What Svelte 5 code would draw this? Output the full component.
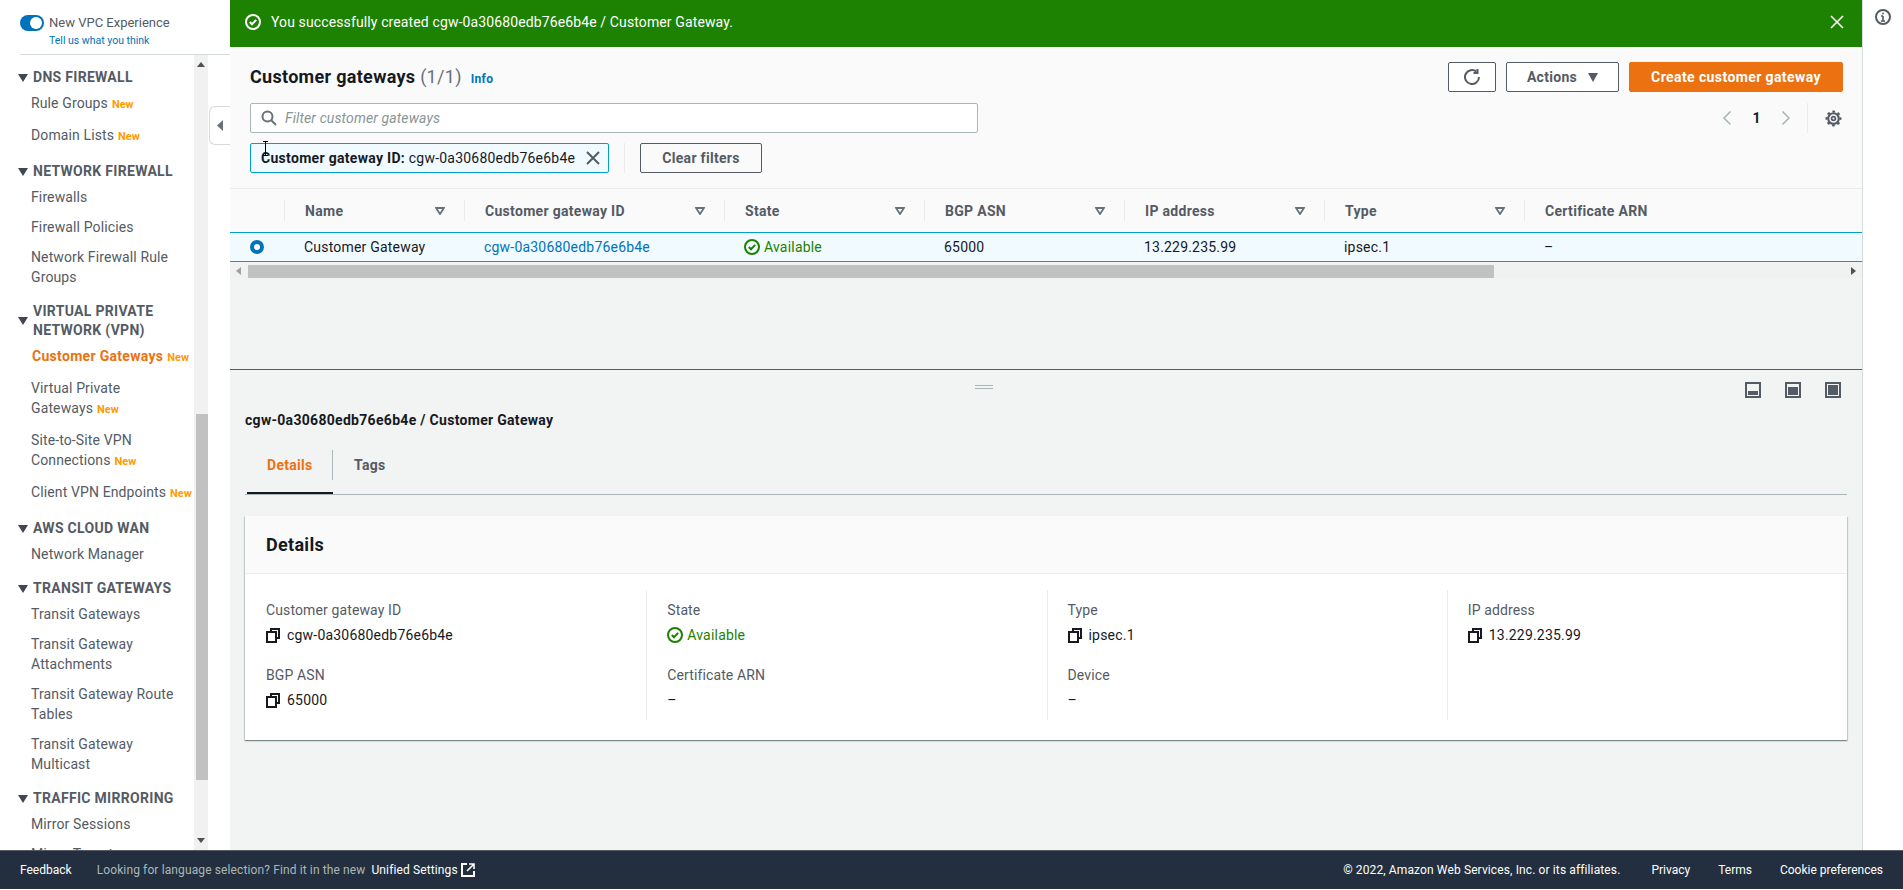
<script>
  const nav = [
    { title: ['DNS FIREWALL'], items: [{ label: 'Rule Groups', isNew: true }, { label: 'Domain Lists', isNew: true }] },
    { title: ['NETWORK FIREWALL'], items: [{ label: 'Firewalls' }, { label: 'Firewall Policies' }, { label: 'Network Firewall Rule Groups' }] },
    { title: ['VIRTUAL PRIVATE', 'NETWORK (VPN)'], items: [
      { label: 'Customer Gateways', isNew: true, active: true, tight: true },
      { label: 'Virtual Private Gateways', isNew: true },
      { label: 'Site-to-Site VPN Connections', isNew: true },
      { label: 'Client VPN Endpoints', isNew: true, tight: true },
    ] },
    { title: ['AWS CLOUD WAN'], items: [{ label: 'Network Manager' }] },
    { title: ['TRANSIT GATEWAYS'], items: [{ label: 'Transit Gateways' }, { label: 'Transit Gateway Attachments' }, { label: 'Transit Gateway Route Tables' }, { label: 'Transit Gateway Multicast' }] },
    { title: ['TRAFFIC MIRRORING'], items: [{ label: 'Mirror Sessions' }, { label: 'Mirror Targets' }] },
  ];

  const columns = ['Name', 'Customer gateway ID', 'State', 'BGP ASN', 'IP address', 'Type', 'Certificate ARN'];

  const details = [
    [{ label: 'Customer gateway ID', value: 'cgw-0a30680edb76e6b4e', copy: true }, { label: 'BGP ASN', value: '65000', copy: true }],
    [{ label: 'State', value: 'Available', status: true }, { label: 'Certificate ARN', value: '–' }],
    [{ label: 'Type', value: 'ipsec.1', copy: true }, { label: 'Device', value: '–' }],
    [{ label: 'IP address', value: '13.229.235.99', copy: true }],
  ];
</script>

{#snippet checkIcon(cls)}
  <svg class={cls} viewBox="0 0 16 16" fill="none" stroke="currentColor" stroke-width="2"><circle cx="8" cy="8" r="7" /><path d="M4.8 8l2.2 2.3 4.2-4.4" /></svg>
{/snippet}

{#snippet copyIcon()}
  <svg class="copy" viewBox="0 0 14 16" fill="none" stroke="#16191f" stroke-width="2"><path d="M5 4V2h8v9h-3" /><rect x="1" y="5" width="9" height="10" /></svg>
{/snippet}

<div class="console">
  <aside class="sidebar">
    <div class="experience">
      <span class="toggle"><span class="knob"></span></span>
      <div>
        <div class="exp-title">New VPC Experience</div>
        <div class="exp-link">Tell us what you think</div>
      </div>
    </div>
    <div class="nav-wrap">
      <nav class="nav">
        {#each nav as group}
          <div class="group">
            <div class="group-title">
              <svg class="caret" viewBox="0 0 10 8"><path d="M0 0h10L5 8z" /></svg>
              <div>{#each group.title as line}<div>{line}</div>{/each}</div>
            </div>
            {#each group.items as item}
              <div class="item" class:active={item.active} class:has-new={item.isNew} class:tight={item.tight}>
                {item.label}{#if item.isNew}<span class="new">New</span>{/if}
              </div>
            {/each}
          </div>
        {/each}
      </nav>
      <div class="vtrack">
        <svg class="varrow" viewBox="0 0 8 5"><path d="M0 5h8L4 0z" /></svg>
        <div class="vthumb"></div>
        <svg class="varrow down" viewBox="0 0 8 5"><path d="M0 0h8L4 5z" /></svg>
      </div>
    </div>
    <div class="collapse"><svg viewBox="0 0 6 11" width="6" height="11"><path d="M6 0v11L0 5.5z" fill="#687078" /></svg></div>
  </aside>

  <main class="main">
    <div class="flash">
      {@render checkIcon('flash-check')}
      <span class="flash-text">You successfully created cgw-0a30680edb76e6b4e / Customer Gateway.</span>
      <svg class="flash-close" viewBox="0 0 14 14" fill="none" stroke="#fff" stroke-width="1.6"><path d="M1 1l12 12M13 1L1 13" /></svg>
    </div>

    <section class="toolbar">
      <div class="row title-row">
        <h1>Customer gateways <span class="count">(1/1)</span><span class="info">Info</span></h1>
        <div class="actions">
          <button class="btn icon-btn" aria-label="Refresh">
            <svg viewBox="0 0 16 16" width="16" height="16" fill="none" stroke="#545b64" stroke-width="2"><path d="M15 8a7 7 0 1 1-2.6-5.4" /><path d="M13.5 0v4h-4" /></svg>
          </button>
          <button class="btn actions-btn">Actions<svg viewBox="0 0 10 9" width="10" height="9"><path d="M0 0h10L5 9z" fill="#545b64" /></svg></button>
          <button class="btn primary">Create customer gateway</button>
        </div>
      </div>
      <div class="row search-row">
        <div class="search">
          <svg viewBox="0 0 16 16" width="16" height="16" fill="none" stroke="#687078" stroke-width="2"><circle cx="6.5" cy="6.5" r="5" /><path d="M10.5 10.5L15 15" /></svg>
          <span>Filter customer gateways</span>
        </div>
        <div class="pager">
          <svg viewBox="0 0 10 16" width="10" height="16" fill="none" stroke="#aab7b8" stroke-width="1.6"><path d="M8.5 1.5L2 8l6.5 6.5" /></svg>
          <span class="page">1</span>
          <svg viewBox="0 0 10 16" width="10" height="16" fill="none" stroke="#aab7b8" stroke-width="1.6"><path d="M1.5 1.5L8 8l-6.5 6.5" /></svg>
          <span class="pager-div"></span>
          <svg class="gear" viewBox="0 0 16 16" width="17" height="17" fill="none" stroke="#545b64"><circle cx="8" cy="8" r="5" stroke-width="2" /><circle cx="8" cy="8" r="6.6" stroke-width="1.8" stroke-dasharray="2.6 2.58" stroke-dashoffset="1.3" /><circle cx="8" cy="8" r="1.8" stroke-width="1.6" /></svg>
        </div>
      </div>
      <div class="row token-row">
        <div class="token">
          <span class="token-text"><b>Customer gateway ID:</b> cgw-0a30680edb76e6b4e</span>
          <svg viewBox="0 0 14 14" width="14" height="14" fill="none" stroke="#545b64" stroke-width="2"><path d="M1 1l12 12M13 1L1 13" /></svg>
        </div>
        <span class="token-div"></span>
        <button class="btn clear">Clear filters</button>
      </div>
      <svg class="ibeam" viewBox="0 0 7 15" width="7" height="15" fill="none" stroke="#000"><path d="M1 .5h5M3.5.5v14M1 14.5h5" /></svg>
    </section>

    <div class="thead grid-cols">
      <div class="th"></div>
      {#each columns as col, i}
        <div class="th">
          <span>{col}</span>
          {#if i < columns.length - 1}
            <svg viewBox="0 0 10 8" width="10" height="8" fill="none" stroke="#687078" stroke-width="1.8"><path d="M1 1h8L5 7z" /></svg>
          {/if}
        </div>
      {/each}
    </div>
    <div class="trow grid-cols">
      <div class="td radio-cell"><span class="radio"></span></div>
      <div class="td">Customer Gateway</div>
      <div class="td link">cgw-0a30680edb76e6b4e</div>
      <div class="td ok">{@render checkIcon('status-check')}Available</div>
      <div class="td">65000</div>
      <div class="td">13.229.235.99</div>
      <div class="td">ipsec.1</div>
      <div class="td">–</div>
    </div>
    <div class="hscroll">
      <svg class="harrow" viewBox="0 0 5 8"><path d="M5 0v8L0 4z" /></svg>
      <div class="hthumb"></div>
      <svg class="harrow end" viewBox="0 0 5 8"><path d="M0 0v8l5-4z" /></svg>
    </div>
    <div class="list-fill"></div>

    <section class="pane">
      <div class="handle"></div>
      <div class="pane-icons">
        <span class="layout bottom"><i></i></span>
        <span class="layout middle"><i></i></span>
        <span class="layout full"><i></i></span>
      </div>
      <h2 class="pane-title">cgw-0a30680edb76e6b4e / Customer Gateway</h2>
      <div class="tabs">
        <div class="tab selected"><span>Details</span></div>
        <div class="tab"><span>Tags</span></div>
      </div>
      <div class="card">
        <div class="card-head">Details</div>
        <div class="card-body">
          {#each details as col}
            <div class="col">
              {#each col as field}
                <div class="field">
                  <div class="label">{field.label}</div>
                  <div class="value" class:ok={field.status}>
                    {#if field.copy}{@render copyIcon()}{/if}
                    {#if field.status}{@render checkIcon('status-check')}{/if}
                    {field.value}
                  </div>
                </div>
              {/each}
            </div>
          {/each}
        </div>
      </div>
    </section>
  </main>

  <div class="rail">
    <svg viewBox="0 0 16 16" width="16" height="16" fill="none" stroke="#545b64" stroke-width="2"><circle cx="8" cy="8" r="7" /><path d="M8 7v5M6 12h4M6 7h2" stroke-width="1.6" /><circle cx="8" cy="4.5" r=".9" fill="#545b64" stroke="none" /></svg>
  </div>

  <footer class="footer">
    <span class="fb">Feedback</span>
    <span class="lang">Looking for language selection? Find it in the new</span>
    <span class="unified">Unified Settings</span>
    <svg viewBox="0 0 14 14" width="14" height="14" fill="none" stroke="#fff" stroke-width="2"><path d="M6 1H1v12h12V8" /><path d="M8 1h5v5M13 1L6 8" stroke-width="1.6" /></svg>
    <span class="legal">© 2022, Amazon Web Services, Inc. or its affiliates.</span>
    <span class="flink">Privacy</span>
    <span class="flink">Terms</span>
    <span class="flink">Cookie preferences</span>
  </footer>
</div>

<style>
  :global(body) { margin: 0; background: #fff; }
  .console {
    width: 1903px; height: 890px; overflow: hidden;
    display: grid; grid-template-columns: 230px 1633px 40px; grid-template-rows: 850px 39px;
    font: 14px/20px Roboto, "Noto Sans", sans-serif; color: #16191f; letter-spacing: .12px;
  }
  b, h1, h2 { letter-spacing: .3px; }

  .sidebar { position: relative; display: flex; flex-direction: column; min-height: 0; background: #fff; }
  .experience { height: 55px; box-sizing: border-box; margin-left: 20px; padding-top: 15px; display: flex; gap: 5px; border-bottom: 1px solid #d5dbdb; letter-spacing: 0; }
  .toggle { width: 24px; height: 16px; border-radius: 8px; background: #0073bb; display: flex; align-items: center; justify-content: flex-end; padding-right: 2px; box-sizing: border-box; }
  .knob { width: 12px; height: 12px; border-radius: 50%; background: #fff; }
  .exp-title { font-size: 13px; line-height: 16px; color: #545b64; }
  .exp-link { font-size: 10.5px; line-height: 14px; margin-top: 3px; color: #0073bb; }
  .nav-wrap { flex: 1; min-height: 0; display: flex; width: 208px; }
  .nav { width: 194px; overflow: hidden; padding-top: 3px; box-sizing: border-box; }
  .group { margin-top: 10px; }
  .group-title { display: flex; gap: 5px; padding-left: 18px; padding-bottom: 1px; font-weight: 700; line-height: 19px; color: #545b64; align-items: center; letter-spacing: .3px; }
  .caret { width: 10px; height: 8px; fill: #414750; flex: none; }
  .item { padding: 5px 8px 5px 31px; color: #545b64; }
  .item.has-new { padding-bottom: 7px; }
  .item.tight { padding-right: 0; white-space: nowrap; }
  .item.active { color: #ec7211; font-weight: 700; letter-spacing: .3px; padding-left: 32px; }
  .new { margin-left: 4px; font-size: 11px; line-height: 1; font-weight: 700; color: #ff9900; letter-spacing: 0; }
  .vtrack { width: 14px; background: #f1f1f1; position: relative; display: flex; flex-direction: column; align-items: center; }
  .varrow { width: 8px; height: 5px; fill: #505050; margin-top: 7px; flex: none; }
  .varrow.down { margin: auto 0 7px; }
  .vthumb { width: 12px; margin: 347px 0 0 2px; height: 366px; background: #c1c1c1; flex: none; }
  .collapse { position: absolute; left: 209px; top: 106px; width: 21px; height: 39px; box-sizing: border-box; background: #fff; border: 1px solid #d5dbdb; border-right: 0; border-radius: 6px 0 0 6px; display: flex; align-items: center; justify-content: center; }

  .main { background: #f2f3f3; border-right: 1px solid #d5dbdb; display: flex; flex-direction: column; min-height: 0; position: relative; }
  .flash { flex: none; height: 47px; background: #1d8102; color: #fff; display: flex; align-items: center; padding: 0 18px 3px 15px; box-sizing: border-box; }
  .flash-check { width: 16px; height: 16px; margin-right: 10px; }
  .flash-close { width: 14px; height: 14px; margin-left: auto; }

  .toolbar { position: relative; flex: none; height: 142px; box-sizing: border-box; padding: 15px 20px 0; background: #fafafa; border-bottom: 1px solid #eaeded; }
  .row { display: flex; align-items: center; height: 30px; }
  .title-row, .search-row { justify-content: space-between; }
  .search-row { margin-top: 11px; }
  .token-row { margin-top: 10px; }
  h1 { margin: 0; padding-top: 2px; font-size: 18px; line-height: 24px; font-weight: 700; }
  .count { font-weight: 400; color: #687078; }
  .info { margin-left: 9px; font-size: 12px; font-weight: 700; color: #0073bb; }
  .actions { display: flex; gap: 10px; margin-right: -1px; }
  .btn { height: 30px; box-sizing: border-box; background: #fff; border: 1px solid #545b64; border-radius: 2px; font: 700 14px/20px Roboto, "Noto Sans", sans-serif; letter-spacing: .3px; color: #545b64; padding: 0; display: flex; align-items: center; justify-content: center; }
  .icon-btn { width: 48px; }
  .actions-btn { width: 113px; gap: 11px; }
  .primary { width: 214px; background: #ec7211; border-color: #ec7211; color: #fff; letter-spacing: .4px; }
  .search { width: 728px; height: 30px; box-sizing: border-box; border: 1px solid #aab7b8; border-radius: 2px; background: #fff; display: flex; align-items: center; gap: 8px; padding-left: 10px; font-style: italic; color: #879596; }
  .pager { display: flex; align-items: center; }
  .page { width: 49px; text-align: center; font-weight: 700; color: #16191f; }
  .pager-div { width: 1px; height: 30px; background: #eaeded; margin: 0 17px 0 16px; }
  .token { width: 359px; height: 30px; box-sizing: border-box; border: 1px solid #00a1c9; border-radius: 2px; background: #f1faff; display: flex; align-items: center; justify-content: space-between; padding: 0 8px 0 10px; }
  .token-text { letter-spacing: .22px; }
  .token-div { width: 1px; height: 30px; background: #eaeded; margin: 0 15px; }
  .clear { width: 122px; background: transparent; }
  .ibeam { position: absolute; left: 32px; top: 94px; }

  .grid-cols { display: grid; grid-template-columns: 55px 180px 260px 200px 200px 200px 200px 1fr; }
  .thead { flex: none; height: 43px; background: #fafafa; align-items: start; padding-top: 11px; box-sizing: border-box; }
  .th { height: 21px; display: flex; align-items: center; justify-content: space-between; padding: 0 19px 0 20px; box-sizing: border-box; font-weight: 700; letter-spacing: .3px; color: #545b64; border-right: 1px solid #eaeded; }
  .th:last-child { border-right: 0; }
  .trow { flex: none; height: 30px; box-sizing: border-box; background: #f1faff; border-top: 1px solid #00a1c9; border-bottom: 1px solid #00a1c9; align-items: center; }
  .td { padding-left: 19px; display: flex; align-items: center; letter-spacing: .2px; }
  .radio-cell { padding-left: 20px; }
  .radio { width: 14px; height: 14px; box-sizing: border-box; border-radius: 50%; border: 4px solid #0073bb; background: #fff; }
  .link { color: #0073bb; }
  .ok { color: #1d8102; }
  .status-check { width: 16px; height: 16px; margin-right: 4px; flex: none; }

  .hscroll { flex: none; height: 14px; margin-top: 2px; background: #f1f1f1; display: flex; align-items: center; }
  .harrow { width: 5px; height: 8px; fill: #a0a0a0; margin: 0 7px 0 6px; flex: none; }
  .harrow.end { fill: #505050; margin: 0 6px 0 auto; }
  .hthumb { width: 1246px; height: 13px; background: #c1c1c1; }
  .list-fill { flex: none; height: 91px; border-bottom: 1px solid #545b64; }

  .pane { position: relative; flex: 1; min-height: 0; padding: 12px 15px 0; }
  .handle { position: absolute; left: 745px; top: 15px; width: 18px; height: 2px; border-top: 1px solid #aab7b8; border-bottom: 1px solid #aab7b8; }
  .pane-icons { display: flex; justify-content: flex-end; gap: 24px; padding-right: 6px; }
  .layout { width: 16px; height: 16px; box-sizing: border-box; border: 2px solid #545b64; padding: 1px; display: flex; align-items: flex-end; }
  .layout i { display: block; width: 100%; background: #545b64; }
  .layout.bottom i { height: 4px; }
  .layout.middle i { height: 8px; }
  .layout.full i { height: 100%; }
  .pane-title { margin: 12px 0 0; font-size: 14px; line-height: 20px; font-weight: 700; }
  .tabs { display: flex; margin-top: 20px; border-bottom: 1px solid #aab7b8; padding-left: 2px; }
  .tab { box-sizing: border-box; height: 44px; padding-bottom: 12px; font-weight: 700; letter-spacing: .3px; color: #545b64; border-bottom: 2px solid transparent; }
  .tab span { display: block; line-height: 30px; padding: 0 20px 0 21px; }
  .tab.selected { border-bottom-color: #16191f; width: 86px; color: #ec7211; }
  .tab.selected span { border-right: 1px solid #aab7b8; padding: 0 20px; }
  .card { margin-top: 21px; background: #fff; box-shadow: 0 1px 1px 0 rgba(0, 28, 36, .3), 1px 1px 1px 0 rgba(0, 28, 36, .15), -1px 1px 1px 0 rgba(0, 28, 36, .15); height: 224px; }
  .card-head { height: 58px; box-sizing: border-box; padding: 0 21px; background: #fafafa; border-bottom: 1px solid #eaeded; font-size: 18px; font-weight: 700; line-height: 58px; letter-spacing: .3px; }
  .card-body { display: grid; grid-template-columns: repeat(4, 1fr); padding: 16px 0 20px 1px; height: 166px; box-sizing: border-box; }
  .col { padding: 10px 0 0 20px; border-left: 1px solid #eaeded; }
  .col:first-child { border-left: 0; padding-left: 20px; }
  .field { margin-bottom: 20px; }
  .field:last-child { margin-bottom: 0; }
  .label { color: #545b64; }
  .value { margin-top: 5px; display: flex; align-items: center; letter-spacing: .2px; }
  .copy { width: 14px; height: 16px; margin-right: 7px; flex: none; }

  .rail { padding: 9px 0 0 12px; background: #fff; }

  .footer { grid-column: 1 / -1; background: #232f3e; border-top: 1px solid #545b64; box-sizing: border-box; display: flex; align-items: center; padding: 0 20px; font-size: 12px; color: #fff; }
  .fb { letter-spacing: 0; }
  .lang { margin-left: 25px; color: #aab7b8; }
  .unified { margin: 0 3px 0 6px; }
  .legal { margin-left: auto; letter-spacing: .12px; }
  .flink { margin-left: 28px; letter-spacing: 0; }
  .legal + .flink { margin-left: 31px; }
</style>
